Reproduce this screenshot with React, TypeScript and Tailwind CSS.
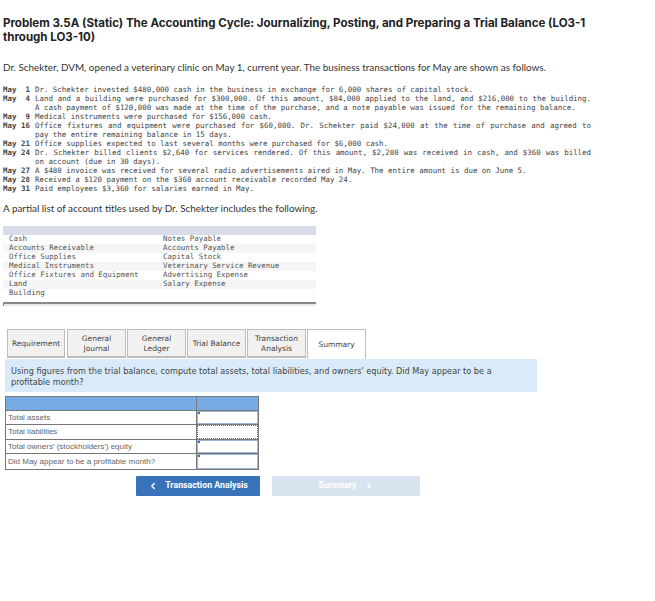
import { ChevronLeft, ChevronRight } from "lucide-react";

const lines = [
  ["May", "1", "Dr. Schekter invested $480,000 cash in the business in exchange for 6,000 shares of capital stock."],
  ["May", "4", "Land and a building were purchased for $300,000. Of this amount, $84,000 applied to the land, and $216,000 to the building. A cash payment of $120,000 was made at the time of the purchase, and a note payable was issued for the remaining balance."],
  ["May", "9", "Medical instruments were purchased for $156,000 cash."],
  ["May", "16", "Office fixtures and equipment were purchased for $60,000. Dr. Schekter paid $24,000 at the time of purchase and agreed to pay the entire remaining balance in 15 days."],
  ["May", "21", "Office supplies expected to last several months were purchased for $6,000 cash."],
  ["May", "24", "Dr. Schekter billed clients $2,640 for services rendered. Of this amount, $2,280 was received in cash, and $360 was billed on account (due in 30 days)."],
  ["May", "27", "A $480 invoice was received for several radio advertisements aired in May. The entire amount is due on June 5."],
  ["May", "28", "Received a $120 payment on the $360 account receivable recorded May 24."],
  ["May", "31", "Paid employees $3,360 for salaries earned in May."],
];

const accounts = [
  ["Cash", "Notes Payable"],
  ["Accounts Receivable", "Accounts Payable"],
  ["Office Supplies", "Capital Stock"],
  ["Medical Instruments", "Veterinary Service Revenue"],
  ["Office Fixtures and Equipment", "Advertising Expense"],
  ["Land", "Salary Expense"],
  ["Building", ""],
];

const tabs = [
  ["Requirement"],
  ["General", "Journal"],
  ["General", "Ledger"],
  ["Trial Balance"],
  ["Transaction", "Analysis"],
];

const rows = ["Total assets", "Total liabilities", "Total owners' (stockholders') equity", "Did May appear to be a profitable month?"];

export default function App() {
  return (
    <div className="min-h-[601px] bg-white pt-[16px] font-['Lato',sans-serif] text-[#333]">
      <h1 className="m-0 w-[600px] pl-[3px] font-['Inter',sans-serif] text-[11.52px] font-bold leading-[14px] text-[#222]">
        Problem 3.5A (Static) The Accounting Cycle: Journalizing, Posting, and Preparing a Trial Balance (LO3-1 through LO3-10)
      </h1>

      <p className="mt-[16px] pl-[3px] text-[9.9px] leading-[14px]">
        Dr. Schekter, DVM, opened a veterinary clinic on May 1, current year. The business transactions for May are shown as follows.
      </p>

      <div className="mt-[11px] w-[591px] pl-[3px] font-['DejaVu_Sans_Mono',monospace] text-[7.43px] leading-[9px] text-[#444]">
        {lines.map((l, i) => (
          <div key={i} className="flex">
            <span className="w-[14px] shrink-0 font-bold">{l[0]}</span>
            <span className="w-[13px] shrink-0 text-right font-bold">{l[1]}</span>
            <span className="ml-[5px] flex-1 text-justify">{l[2]}</span>
          </div>
        ))}
      </div>

      <p className="mt-[8px] pl-[3px] text-[9.9px] leading-[14px]">
        A partial list of account titles used by Dr. Schekter includes the following.
      </p>

      <div className="ml-[3px] mt-[11px] w-[313px] font-['DejaVu_Sans_Mono',monospace] text-[7.43px] leading-[7px] text-[#555]">
        <div className="h-[9px] bg-[#d8dce8]" />
        {accounts.map((a, i) => (
          <div key={i} className={`flex h-[9px] pl-[6px] ${i % 2 === 1 ? "bg-[#f5f5f5]" : "bg-white"}`}>
            <span className="w-[154px]">{a[0]}</span>
            <span>{a[1]}</span>
          </div>
        ))}
        <div className="mt-[4px] h-[4px] border-l border-t-2 border-[#8a8a8a] bg-[#e8e8e8]" />
      </div>

      <div className="ml-[7px] mt-[23px] flex h-[30px] gap-[1px] font-['DejaVu_Sans',sans-serif] text-[7.5px] leading-[10px] text-[#444]">
        {tabs.map((t, i) => (
          <div key={i} className={`flex h-[29px] flex-col items-center justify-center border border-b-2 border-[#bdbdbd] bg-[#f1f1f1] pt-[2px] ${i === 0 ? "mr-[1px] w-[58px]" : "w-[59px]"}`}>
            {t.map((s) => (
              <span key={s}>{s}</span>
            ))}
          </div>
        ))}
        <div className="flex h-[30px] w-[59px] items-center justify-center border border-b-0 border-[#bdbdbd] bg-white">Summary</div>
      </div>

      <div className="ml-[5px] w-[532px] bg-[#d9ebf9] px-[6px] pb-[4px] pt-[7px] font-['DejaVu_Sans',sans-serif] text-[8.16px] leading-[11px] text-[#444]">
        Using figures from the trial balance, compute total assets, total liabilities, and owners' equity. Did May appear to be a profitable month?
      </div>

      <div className="ml-[5px] mt-[4px] w-[254px] border border-[#777] font-['Liberation_Sans',sans-serif] text-[8px] text-[#666]">
        <div className="flex h-[13.5px] border-b border-[#777] bg-[#77abe3]">
          <div className="w-[191px] border-r border-[#777]" />
          <div className="flex-1" />
        </div>
        {rows.map((r, i) => (
          <div key={r} className={`flex h-[14.5px] items-center ${i < 3 ? "border-b border-[#777]" : ""}`}>
            <div className="flex h-full w-[191px] items-center border-r border-[#777] pl-[2px] pt-[1px]">{r}</div>
            <div className={`relative h-full flex-1 ${i === 1 ? "border border-dotted border-[#3a75bb]" : "border border-[#9db4d6]"}`}>
              {i !== 1 && <span className="absolute left-0 top-0 h-[2px] w-[2px] bg-[#3a75bb]" />}
            </div>
          </div>
        ))}
      </div>

      <div className="ml-[136px] mt-[6px] flex gap-[12px] font-['Roboto',sans-serif] text-[8.8px] font-bold text-white">
        <div className="flex h-[20px] w-[124px] items-center justify-center gap-[7px] rounded-[1px] bg-[#3873b9]">
          <ChevronLeft size={10} strokeWidth={3.5} />
          <span>Transaction Analysis</span>
        </div>
        <div className="flex h-[20px] w-[148px] items-center justify-center gap-[7px] rounded-[1px] bg-[#d8e3f0]">
          <span>Summary</span>
          <ChevronRight size={10} strokeWidth={3} />
        </div>
      </div>
    </div>
  );
}
